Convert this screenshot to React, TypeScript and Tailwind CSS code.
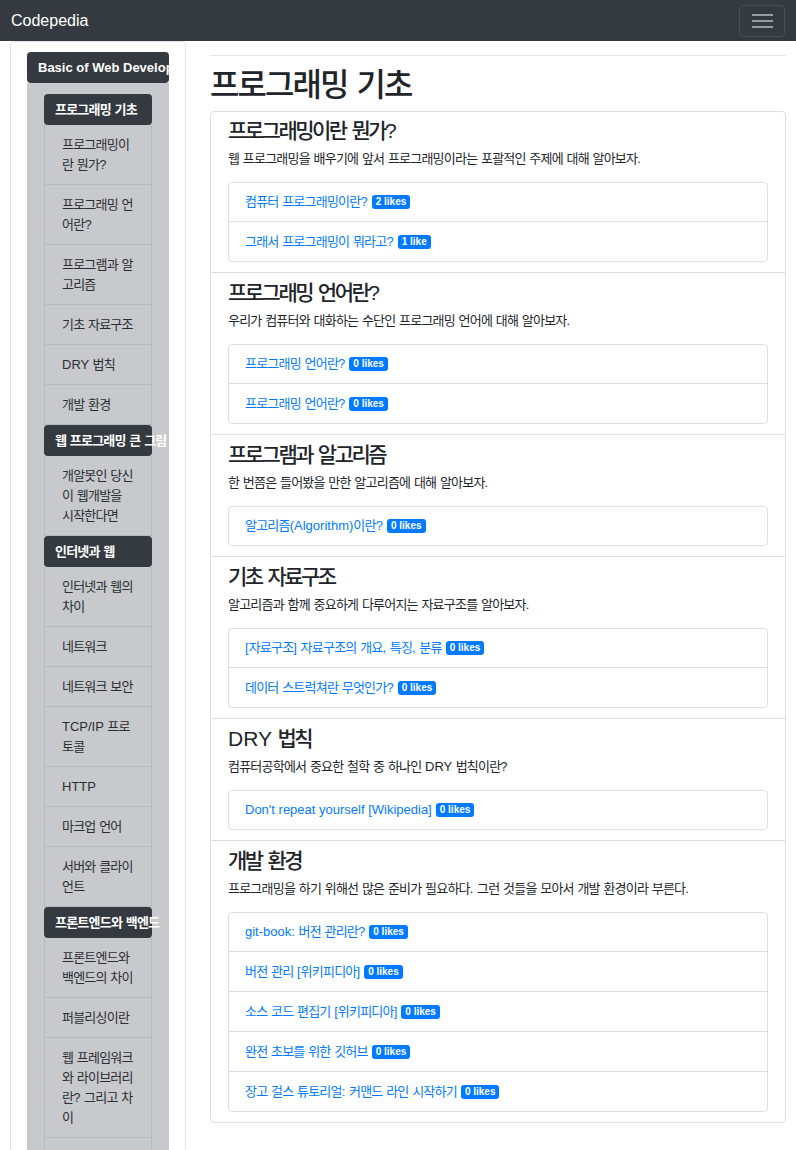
import React from "react";

const HANGUL = /([\uAC00-\uD7A3\u3131-\u318E]+)/;

function K({ t, tight }: { t: string; tight?: boolean }) {
  const parts = t.split(HANGUL);
  return (
    <>
      {parts.map((p, i) =>
        p && /[\uAC00-\uD7A3\u3131-\u318E]/.test(p) ? (
          <span key={i} className={tight ? "tracking-[-0.12em]" : "tracking-[-0.06em]"}>
            {p}
          </span>
        ) : (
          <React.Fragment key={i}>{p}</React.Fragment>
        )
      )}
    </>
  );
}

const groups: { title: string; items: string[] }[] = [
  {
    title: "프로그래밍 기초",
    items: ["프로그래밍이란 뭔가?", "프로그래밍 언어란?", "프로그램과 알고리즘", "기초 자료구조", "DRY 법칙", "개발 환경"],
  },
  { title: "웹 프로그래밍 큰 그림", items: ["개알못인 당신이 웹개발을 시작한다면"] },
  {
    title: "인터넷과 웹",
    items: ["인터넷과 웹의 차이", "네트워크", "네트워크 보안", "TCP/IP 프로토콜", "HTTP", "마크업 언어", "서버와 클라이언트"],
  },
  {
    title: "프론트엔드와 백엔드",
    items: ["프론트엔드와 백엔드의 차이", "퍼블리싱이란", "웹 프레임워크와 라이브러리란? 그리고 차이", "웹 서버와 WAS", "API란?"],
  },
];

const sections: { title: string; desc: string; links: { text: string; likes: string }[] }[] = [
  {
    title: "프로그래밍이란 뭔가?",
    desc: "웹 프로그래밍을 배우기에 앞서 프로그래밍이라는 포괄적인 주제에 대해 알아보자.",
    links: [
      { text: "컴퓨터 프로그래밍이란?", likes: "2 likes" },
      { text: "그래서 프로그래밍이 뭐라고?", likes: "1 like" },
    ],
  },
  {
    title: "프로그래밍 언어란?",
    desc: "우리가 컴퓨터와 대화하는 수단인 프로그래밍 언어에 대해 알아보자.",
    links: [
      { text: "프로그래밍 언어란?", likes: "0 likes" },
      { text: "프로그래밍 언어란?", likes: "0 likes" },
    ],
  },
  {
    title: "프로그램과 알고리즘",
    desc: "한 번쯤은 들어봤을 만한 알고리즘에 대해 알아보자.",
    links: [{ text: "알고리즘(Algorithm)이란?", likes: "0 likes" }],
  },
  {
    title: "기초 자료구조",
    desc: "알고리즘과 함께 중요하게 다루어지는 자료구조를 알아보자.",
    links: [
      { text: "[자료구조] 자료구조의 개요, 특징, 분류", likes: "0 likes" },
      { text: "데이터 스트럭쳐란 무엇인가?", likes: "0 likes" },
    ],
  },
  {
    title: "DRY 법칙",
    desc: "컴퓨터공학에서 중요한 철학 중 하나인 DRY 법칙이란?",
    links: [{ text: "Don't repeat yourself [Wikipedia]", likes: "0 likes" }],
  },
  {
    title: "개발 환경",
    desc: "프로그래밍을 하기 위해선 많은 준비가 필요하다. 그런 것들을 모아서 개발 환경이라 부른다.",
    links: [
      { text: "git-book: 버전 관리란?", likes: "0 likes" },
      { text: "버전 관리 [위키피디아]", likes: "0 likes" },
      { text: "소스 코드 편집기 [위키피디아]", likes: "0 likes" },
      { text: "완전 초보를 위한 깃허브", likes: "0 likes" },
      { text: "장고 걸스 튜토리얼: 커맨드 라인 시작하기", likes: "0 likes" },
    ],
  },
];

export default function App() {
  return (
    <div className="h-[1150px] overflow-hidden bg-white text-[#212529] font-['Liberation_Sans','Noto_Sans_CJK_KR',sans-serif]">
      <nav className="h-[41px] bg-[#343a40] flex items-center justify-between pl-[11px] pr-[11px]">
        <span className="text-white text-[16px] leading-[20px]">Codepedia</span>
        <button className="w-[46px] h-[32px] border border-white/10 rounded-[4px] flex flex-col items-center justify-center gap-[4px]">
          <span className="block w-[21px] h-[2px] bg-white/50" />
          <span className="block w-[21px] h-[2px] bg-white/50" />
          <span className="block w-[21px] h-[2px] bg-white/50" />
        </button>
      </nav>
      <div className="flex items-start">
        <aside className="ml-[10px] w-[176px] shrink-0 h-[1200px] border border-[#dee2e6] rounded-t-[4px] pt-[10px] px-[16px] flex flex-col">
          <div className="h-[31px] bg-[#343a40] rounded-[4px] text-white font-bold text-[13px] pl-[11px] leading-[31px] whitespace-nowrap">
            Basic of Web Development
          </div>
          <div className="flex-1 bg-[#c8c9cc] pt-[11px] px-[17px]">
            {groups.map((g) => (
              <div key={g.title}>
                <div className="h-[31px] bg-[#343a40] rounded-[4px] text-white font-bold text-[13px] pl-[11px] leading-[31px] whitespace-nowrap">
                  <K t={g.title} />
                </div>
                {g.items.map((it) => (
                  <div
                    key={it}
                    className="border-x border-b border-[#b8b9bc] pl-[17px] pr-[17px] pt-[10px] pb-[9px] text-[13px] leading-[20px] text-[#2a2e33]"
                  >
                    <K t={it} />
                  </div>
                ))}
              </div>
            ))}
          </div>
        </aside>
        <main className="ml-[24px] w-[576px] shrink-0 pt-[14px]">
          <div className="h-px bg-[#e6e6e6]" />
          <h1 className="mt-[9px] text-[32px] leading-[40px] font-medium">
            <K t="프로그래밍 기초" />
          </h1>
          <div className="mt-[6px] border border-[#dfdfdf] rounded-[4px]">
            {sections.map((s, i) => (
              <section
                key={s.title}
                className={
                  i === 0
                    ? "px-[17px] pt-[5px] pb-[10px]"
                    : "border-t border-[#dfdfdf] px-[17px] pt-[6px] pb-[10px]"
                }
              >
                <h4 className="text-[21px] leading-[28px] font-medium">
                  <K t={s.title} tight />
                </h4>
                <p className="mt-[4px] text-[13px] leading-[20px]">
                  <K t={s.desc} />
                </p>
                <div className="mt-[13px] border border-[#dfdfdf] rounded-[4px]">
                  {s.links.map((l, j) => (
                    <div
                      key={j}
                      className={
                        j === 0
                          ? "h-[38px] flex items-center pl-[16px]"
                          : "h-[40px] border-t border-[#dfdfdf] flex items-center pl-[16px]"
                      }
                    >
                      <span className="text-[13px] leading-[20px] text-[#007bff]">
                        <K t={l.text} />
                      </span>
                      <span className="ml-[4px] bg-[#007bff] text-white text-[10px] font-bold px-[4px] leading-[14px] rounded-[3px]">
                        {l.likes}
                      </span>
                    </div>
                  ))}
                </div>
              </section>
            ))}
          </div>
        </main>
      </div>
    </div>
  );
}
